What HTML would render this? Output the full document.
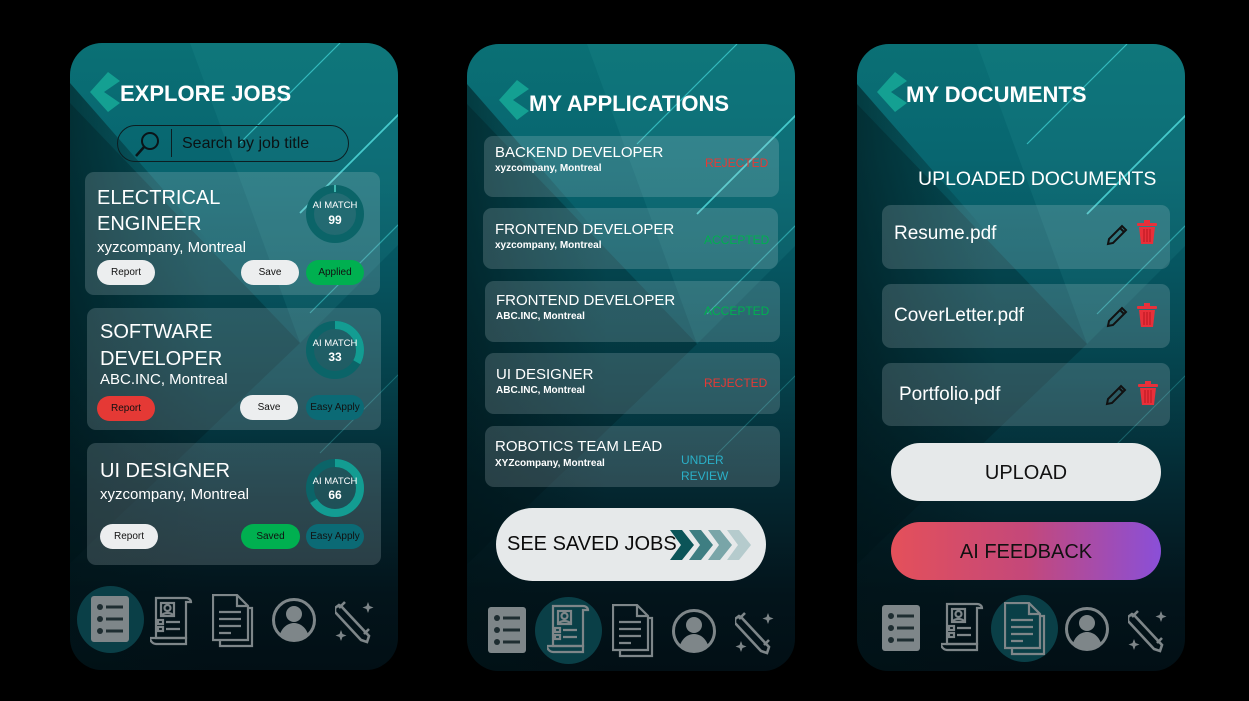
<!DOCTYPE html>
<html><head><meta charset="utf-8"><style>
*{margin:0;padding:0;box-sizing:border-box}
body{width:1249px;height:701px;background:#000;position:relative;overflow:hidden;font-family:"Liberation Sans",sans-serif;color:#fff}
.ph{position:absolute;top:43px;width:328px;height:627px;border-radius:32px;overflow:hidden;
background:linear-gradient(180deg,#0a7075 0%,#086670 18%,#065560 36%,#05404a 54%,#04262f 72%,#03141b 88%,#020f15 100%)}
.ph svg.bg{position:absolute;left:0;top:0}
.a{position:absolute}
.t{position:absolute;white-space:nowrap}
.card{position:absolute;background:rgba(200,215,218,0.2);border-radius:9px}
.btn{position:absolute;border-radius:13px;font-size:10px;color:#111;display:flex;align-items:center;justify-content:center;line-height:1}
.title{font-weight:bold;font-size:22px}
</style></head><body>

<svg width="0" height="0" style="position:absolute">
<defs>
<linearGradient id="shade" x1="0" y1="0" x2="1" y2="0"><stop offset="0" stop-color="#001418" stop-opacity="0.55"/><stop offset="1" stop-color="#001418" stop-opacity="0"/></linearGradient>
<g id="bgart">
<polygon points="0,40 0,627 140,627 140,200" fill="url(#shade)"/>
<polygon points="0,60 230,300 0,520" fill="rgba(0,15,20,0.25)"/>
<polygon points="120,0 330,0 330,200 230,300" fill="rgba(60,170,175,0.12)"/>
<line x1="270" y1="0" x2="170" y2="100" stroke="#4ee8ea" stroke-width="1.2" opacity="0.6"/>
<line x1="330" y1="70" x2="230" y2="170" stroke="#5ef0f0" stroke-width="1.8" opacity="0.7"/>
<line x1="330" y1="180" x2="240" y2="270" stroke="#4ee8ea" stroke-width="1.2" opacity="0.45"/>
<line x1="330" y1="330" x2="250" y2="410" stroke="#4ee8ea" stroke-width="1" opacity="0.25"/>
</g>
<g id="chev"><polygon points="18,0 30,9 14,20 30,31 18,40 0,20" fill="#14a092"/></g>
<g id="ilist"><rect x="0" y="0" width="38" height="46" rx="3" fill="#7e8689"/><g fill="#1e2d31"><circle cx="9" cy="11" r="3"/><circle cx="9" cy="23" r="3"/><circle cx="9" cy="35" r="3"/><rect x="15" y="9.5" width="17" height="3"/><rect x="15" y="21.5" width="17" height="3"/><rect x="15" y="33.5" width="17" height="3"/></g></g>
<g id="iresume" fill="none" stroke="#7e8689" stroke-width="2.2"><path d="M6 2h30c3 0 5 2 5 4h-5v36H6z"/><rect x="11" y="7" width="13" height="13"/><circle cx="17.5" cy="12" r="3"/><path d="M12 20c0-4 11-4 11 0"/><rect x="8" y="24" width="5" height="4"/><rect x="8" y="31" width="5" height="4"/><path d="M16 26h14M16 33h14M0 42h36v6H6c-3 0-6-3-6-6z"/></g>
<g id="idoc" fill="none" stroke="#7e8689" stroke-width="2.2"><path d="M1 1h24l11 11v34H1z"/><path d="M25 1v11h11M36 14h4v38H8v-6"/><path d="M7 18h22M7 25h22M7 32h22M7 39h12"/></g>
<g id="iuser"><circle cx="22" cy="22" r="20.5" fill="none" stroke="#7e8689" stroke-width="3"/><circle cx="22" cy="16" r="8" fill="#7e8689"/><path d="M8 36c3-8 9-11 14-11s11 3 14 11c-4 4-9 6-14 6s-10-2-14-6z" fill="#7e8689"/></g>
<g id="iai" fill="none" stroke="#7e8689" stroke-width="2.6"><path d="M6 6l28 30 -2 6 -6-2L0 12l0-4 4-3z"/><path d="M10 2l-6 6M29 34l5-5"/><path d="M33 2l1.5 4 4 1.5-4 1.5L33 13l-1.5-4-4-1.5 4-1.5z" fill="#7e8689" stroke="none"/><path d="M6 30l1.5 4 4 1.5-4 1.5L6 41l-1.5-4-4-1.5 4-1.5z" fill="#7e8689" stroke="none"/></g>
<g id="ring"><circle cx="0" cy="0" r="25" fill="rgba(20,90,95,0.5)" stroke="#0b6468" stroke-width="8"/></g>
<g id="pen" fill="none" stroke="#111" stroke-width="2"><path d="M3 21l1-5L17 3l4 4L8 20z M15 5l4 4"/></g>
<g id="trash" fill="#e8303a"><rect x="1" y="3" width="20" height="3" rx="1"/><rect x="8" y="0" width="6" height="4"/><path d="M3 7h16l-2 17H5z"/><g stroke="#b8141f" stroke-width="1"><path d="M8 9v13M11 9v13M14 9v13"/></g></g>
</defs></svg>

<!-- PHONE 1 -->
<div class="ph" style="left:70px">
<svg class="bg" width="328" height="627"><use href="#bgart"/></svg>
<svg class="a" style="left:20px;top:29px" width="32" height="42"><use href="#chev"/></svg>
<div class="t title" style="left:50px;top:38px">EXPLORE JOBS</div>
<div class="a" style="left:47px;top:82px;width:232px;height:37px;border:1px solid #0c1e22;border-radius:19px"></div>
<svg class="a" style="left:63px;top:86px" width="30" height="30"><circle cx="17" cy="12" r="8" fill="none" stroke="#0a1418" stroke-width="2"/><path d="M11 18L3 27" stroke="#0a1418" stroke-width="2.5"/></svg>
<div class="a" style="left:101px;top:86px;width:1px;height:28px;background:#0c1e22"></div>
<div class="t" style="left:112px;top:92px;font-size:16px;color:#0b1214">Search by job title</div>

<div class="card" style="left:15px;top:129px;width:295px;height:123px"></div>
<div class="t" style="left:27px;top:142px;font-size:20px;line-height:26px">ELECTRICAL<br>ENGINEER</div>
<div class="t" style="left:27px;top:196px;font-size:15px">xyzcompany, Montreal</div>
<svg class="a" style="left:235px;top:141px" width="60" height="60"><g transform="translate(30,30)"><use href="#ring"/><rect x="-1" y="-29" width="2" height="7" fill="#3fb8b0"/></g></svg>
<div class="t" style="left:240px;top:157px;font-size:9.5px;width:50px;text-align:center">AI MATCH</div>
<div class="t" style="left:240px;top:170px;font-size:12px;font-weight:bold;width:50px;text-align:center">99</div>
<div class="btn" style="left:27px;top:217px;width:58px;height:25px;background:#eceeef">Report</div>
<div class="btn" style="left:171px;top:217px;width:58px;height:25px;background:#eceeef">Save</div>
<div class="btn" style="left:236px;top:217px;width:58px;height:25px;background:#00b050">Applied</div>

<div class="card" style="left:17px;top:265px;width:294px;height:122px"></div>
<div class="t" style="left:30px;top:276px;font-size:20px;line-height:27px">SOFTWARE<br>DEVELOPER</div>
<div class="t" style="left:30px;top:328px;font-size:15px">ABC.INC, Montreal</div>
<svg class="a" style="left:235px;top:277px" width="60" height="60"><g transform="translate(30,30)"><use href="#ring"/><circle r="25" fill="none" stroke="#139c92" stroke-width="8" stroke-dasharray="52 200" transform="rotate(-90)"/></g></svg>
<div class="t" style="left:240px;top:295px;font-size:9.5px;width:50px;text-align:center">AI MATCH</div>
<div class="t" style="left:240px;top:307px;font-size:12px;font-weight:bold;width:50px;text-align:center">33</div>
<div class="btn" style="left:27px;top:353px;width:58px;height:25px;background:#e53935">Report</div>
<div class="btn" style="left:170px;top:352px;width:58px;height:25px;background:#eceeef">Save</div>
<div class="btn" style="left:236px;top:352px;width:58px;height:25px;background:#0b6a75">Easy Apply</div>

<div class="card" style="left:17px;top:400px;width:294px;height:122px"></div>
<div class="t" style="left:30px;top:417px;font-size:20px">UI DESIGNER</div>
<div class="t" style="left:30px;top:443px;font-size:15px">xyzcompany, Montreal</div>
<svg class="a" style="left:235px;top:415px" width="60" height="60"><g transform="translate(30,30)"><use href="#ring"/><circle r="25" fill="none" stroke="#139c92" stroke-width="8" stroke-dasharray="104 200" transform="rotate(-90)"/></g></svg>
<div class="t" style="left:240px;top:433px;font-size:9.5px;width:50px;text-align:center">AI MATCH</div>
<div class="t" style="left:240px;top:445px;font-size:12px;font-weight:bold;width:50px;text-align:center">66</div>
<div class="btn" style="left:30px;top:481px;width:58px;height:25px;background:#eceeef">Report</div>
<div class="btn" style="left:171px;top:481px;width:59px;height:25px;background:#00b050">Saved</div>
<div class="btn" style="left:236px;top:481px;width:58px;height:25px;background:#0b6a75">Easy Apply</div>

<div class="a" style="left:7px;top:543px;width:67px;height:67px;border-radius:50%;background:#0a3f47"></div>
<svg class="a" style="left:21px;top:553px" width="40" height="48"><use href="#ilist"/></svg>
<svg class="a" style="left:80px;top:553px" width="44" height="50"><use href="#iresume"/></svg>
<svg class="a" style="left:142px;top:551px" width="42" height="54"><use href="#idoc"/></svg>
<svg class="a" style="left:202px;top:555px" width="46" height="46"><use href="#iuser"/></svg>
<svg class="a" style="left:265px;top:557px" width="42" height="44"><use href="#iai"/></svg>
</div>

<!-- PHONE 2 -->
<div class="ph" style="left:467px;top:44px">
<svg class="bg" width="328" height="627"><use href="#bgart"/></svg>
<svg class="a" style="left:32px;top:36px" width="32" height="42"><use href="#chev"/></svg>
<div class="t title" style="left:62px;top:47px">MY APPLICATIONS</div>

<div class="card" style="left:17px;top:92px;width:295px;height:61px"></div>
<div class="t" style="left:28px;top:100px;font-size:15px">BACKEND DEVELOPER</div>
<div class="t" style="left:28px;top:119px;font-size:10px;font-weight:bold">xyzcompany, Montreal</div>
<div class="t" style="left:238px;top:112px;font-size:12px;color:#e53935">REJECTED</div>

<div class="card" style="left:16px;top:164px;width:295px;height:61px"></div>
<div class="t" style="left:28px;top:177px;font-size:15px">FRONTEND DEVELOPER</div>
<div class="t" style="left:28px;top:196px;font-size:10px;font-weight:bold">xyzcompany, Montreal</div>
<div class="t" style="left:237px;top:189px;font-size:12px;color:#00b050">ACCEPTED</div>

<div class="card" style="left:18px;top:237px;width:295px;height:61px"></div>
<div class="t" style="left:29px;top:248px;font-size:15px">FRONTEND DEVELOPER</div>
<div class="t" style="left:29px;top:267px;font-size:10px;font-weight:bold">ABC.INC, Montreal</div>
<div class="t" style="left:237px;top:260px;font-size:12px;color:#00b050">ACCEPTED</div>

<div class="card" style="left:18px;top:309px;width:295px;height:61px"></div>
<div class="t" style="left:29px;top:322px;font-size:15px">UI DESIGNER</div>
<div class="t" style="left:29px;top:341px;font-size:10px;font-weight:bold">ABC.INC, Montreal</div>
<div class="t" style="left:237px;top:332px;font-size:12px;color:#e53935">REJECTED</div>

<div class="card" style="left:18px;top:382px;width:295px;height:61px"></div>
<div class="t" style="left:28px;top:394px;font-size:15px">ROBOTICS TEAM LEAD</div>
<div class="t" style="left:28px;top:414px;font-size:10px;font-weight:bold">XYZcompany, Montreal</div>
<div class="t" style="left:214px;top:408px;font-size:12px;color:#2ab0c8;line-height:16px">UNDER<br>REVIEW</div>

<div class="a" style="left:29px;top:464px;width:270px;height:73px;border-radius:37px;background:#e6e9ea"></div>
<div class="t" style="left:40px;top:489px;font-size:20px;color:#0c0c0c">SEE SAVED JOBS</div>
<svg class="a" style="left:203px;top:486px" width="85" height="32"><polygon points="0,0 12,0 24,15 12,30 0,30 11,15" fill="#0b5458"/><polygon points="19,0 31,0 43,15 31,30 19,30 30,15" fill="#3e7e82"/><polygon points="38,0 50,0 62,15 50,30 38,30 49,15" fill="#79a5a8"/><polygon points="57,0 69,0 81,15 69,30 57,30 68,15" fill="#b5cbcd"/></svg>

<div class="a" style="left:68px;top:553px;width:67px;height:67px;border-radius:50%;background:#0a3f47"></div>
<svg class="a" style="left:21px;top:563px" width="40" height="48"><use href="#ilist"/></svg>
<svg class="a" style="left:80px;top:560px" width="44" height="50"><use href="#iresume"/></svg>
<svg class="a" style="left:145px;top:560px" width="42" height="54"><use href="#idoc"/></svg>
<svg class="a" style="left:205px;top:565px" width="46" height="46"><use href="#iuser"/></svg>
<svg class="a" style="left:268px;top:567px" width="42" height="44"><use href="#iai"/></svg>
</div>

<!-- PHONE 3 -->
<div class="ph" style="left:857px;top:44px">
<svg class="bg" width="328" height="627"><use href="#bgart"/></svg>
<svg class="a" style="left:20px;top:28px" width="32" height="42"><use href="#chev"/></svg>
<div class="t title" style="left:49px;top:38px">MY DOCUMENTS</div>
<div class="t" style="left:61px;top:124px;font-size:19.5px">UPLOADED DOCUMENTS</div>

<div class="card" style="left:25px;top:161px;width:288px;height:64px"></div>
<div class="t" style="left:37px;top:179px;font-size:19px">Resume.pdf</div>
<svg class="a" style="left:248px;top:179px" width="24" height="26"><use href="#pen"/></svg>
<svg class="a" style="left:279px;top:176px" width="22" height="26"><use href="#trash"/></svg>

<div class="card" style="left:25px;top:240px;width:288px;height:64px"></div>
<div class="t" style="left:37px;top:261px;font-size:19px">CoverLetter.pdf</div>
<svg class="a" style="left:248px;top:261px" width="24" height="26"><use href="#pen"/></svg>
<svg class="a" style="left:279px;top:259px" width="22" height="26"><use href="#trash"/></svg>

<div class="card" style="left:25px;top:319px;width:288px;height:63px"></div>
<div class="t" style="left:42px;top:340px;font-size:19px">Portfolio.pdf</div>
<svg class="a" style="left:247px;top:339px" width="24" height="26"><use href="#pen"/></svg>
<svg class="a" style="left:280px;top:337px" width="22" height="26"><use href="#trash"/></svg>

<div class="a" style="left:34px;top:399px;width:270px;height:58px;border-radius:29px;background:#e6e9ea"></div>
<div class="t" style="left:34px;top:418px;width:270px;text-align:center;font-size:20px;color:#111">UPLOAD</div>
<div class="a" style="left:34px;top:478px;width:270px;height:58px;border-radius:29px;background:linear-gradient(90deg,#e4505a,#c4487a 50%,#8a4fd8)"></div>
<div class="t" style="left:34px;top:497px;width:270px;text-align:center;font-size:20px;color:#111">AI FEEDBACK</div>

<div class="a" style="left:134px;top:551px;width:67px;height:67px;border-radius:50%;background:#0a3f47"></div>
<svg class="a" style="left:25px;top:561px" width="40" height="48"><use href="#ilist"/></svg>
<svg class="a" style="left:84px;top:558px" width="44" height="50"><use href="#iresume"/></svg>
<svg class="a" style="left:147px;top:558px" width="42" height="54"><use href="#idoc"/></svg>
<svg class="a" style="left:208px;top:563px" width="46" height="46"><use href="#iuser"/></svg>
<svg class="a" style="left:271px;top:565px" width="42" height="44"><use href="#iai"/></svg>
</div>
</body></html>
